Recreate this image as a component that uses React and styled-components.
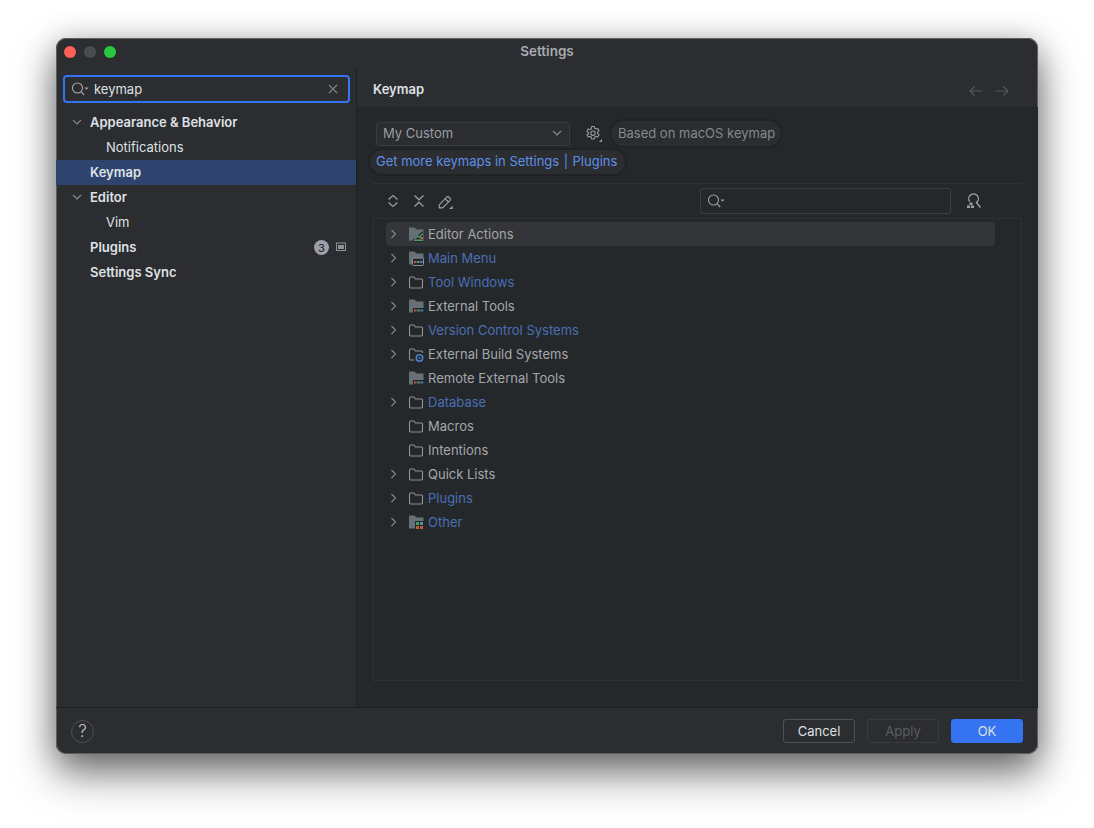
import React from "react";
import styled, { createGlobalStyle } from "styled-components";

const Global = createGlobalStyle`
  html, body { margin: 0; padding: 0; background: #fff; }
  body { font-family: Inter, "Noto Sans", sans-serif; -webkit-font-smoothing: antialiased; }
  #root { width: 1094px; height: 828px; overflow: hidden; }
`;
const Page = styled.div`
  width: 1094px; height: 828px; box-sizing: border-box; padding: 38px 56px 74px;
`;
const Win = styled.div`
  height: 716px; box-sizing: border-box; background: #2b2d30; border-radius: 10px;
  box-shadow: 0 0 0 1px #5d5e60 inset, 0 20px 40px rgba(0,0,0,.5), 0 4px 30px rgba(0,0,0,.25);
  display: flex; flex-direction: column; overflow: hidden; color: #dfe1e5; position: relative;
`;
const TitleBar = styled.div`
  height: 30px; flex: none; display: flex; align-items: center; position: relative; justify-content: center;
  font-size: 13.5px; font-weight: 600; color: #a8abb0; padding-bottom: 4px; box-sizing: border-box;
`;
const Lights = styled.div`
  position: absolute; left: 8px; top: 8px; display: flex; gap: 8px;
`;
const Light = styled.span`
  width: 12px; height: 12px; border-radius: 50%; background: ${p => p.$c};
`;
const Main = styled.div`flex: 1; display: flex; min-height: 0;`;
const Side = styled.div`
  width: 301px; flex: none; box-sizing: border-box; padding-top: 7px; border-right: 1px solid #1e1f22;
`;
const SideSearch = styled.div`
  margin: 0 6px 7px 7px; height: 28px; box-sizing: border-box; border: 2px solid #3574f0; border-radius: 4px;
  display: flex; align-items: center; padding: 0 10px 0 6px; font-size: 13px; color: #dfe1e5;
  & > span { margin-left: 5px; flex: 1; padding-bottom: 1px; }
`;
const SideRow = styled.div`
  height: 25px; display: flex; align-items: center; font-size: 13px; position: relative;
  padding-left: ${p => p.$indent}px; font-weight: ${p => p.$bold ? 600 : 400};
  padding-bottom: 1px; box-sizing: border-box;
  background: ${p => p.$sel ? "#2e436e" : "transparent"};
`;
const SideChev = styled.span`
  position: absolute; left: 15px; top: 6px; width: 12px; height: 12px; display: flex;
`;
const Badge = styled.span`
  position: absolute; left: 258px; top: 5px; width: 15px; height: 15px; border-radius: 50%;
  background: #9da0a8; color: #2b2d30; font-size: 11px; font-weight: 500;
  display: flex; align-items: center; justify-content: center;
`;
const BadgeIcon = styled.span`position: absolute; left: 280px; top: 7px; display: flex;`;
const Right = styled.div`flex: 1; display: flex; flex-direction: column; min-width: 0;`;
const Head = styled.div`
  height: 39px; flex: none; display: flex; align-items: center; justify-content: space-between;
  padding: 3px 28px 0 16px; box-sizing: border-box; font-size: 13px; font-weight: 600;
`;
const Arrows = styled.div`display: flex; gap: 10px; margin-top: 4px;`;
const Body = styled.div`
  flex: 1; background: #25282b; padding: 12px 16px 26px 11px; box-sizing: border-box;
  display: flex; flex-direction: column; min-height: 0;
`;
const KeymapRow = styled.div`
  display: flex; align-items: center; height: 29px; padding-left: 8px; flex: none;
`;
const Combo = styled.div`
  width: 194px; height: 24px; box-sizing: border-box; background: #2b2d30; border: 1px solid #393b40; border-radius: 3px;
  display: flex; align-items: center; justify-content: space-between; padding: 0 6px 1px;
  color: #9a9da3; font-size: 13px;
`;
const GearWrap = styled.span`margin: 0 6px 0 15px; display: flex;`;
const Pill = styled.div`
  height: ${p => p.$h}px; box-sizing: border-box; border: 2px solid #202225; border-radius: 15px; background: #2b2d30;
  display: inline-flex; align-items: center; padding: 0 ${p => p.$pr}px ${p => p.$pb}px ${p => p.$pl}px; font-size: 13px; color: ${p => p.$c};
`;
const LinkRow = styled.div`display: flex; height: 28px; flex: none;`;
const Sep = styled.span`margin: 0 4.5px; color: ${p => p.$c};`;
const Rule = styled.div`height: 1px; margin: 7px 0 0 5px; background: #303236; flex: none;`;
const Tools = styled.div`
  height: 34px; flex: none; display: flex; align-items: center; padding-left: 17px; position: relative;
`;
const ToolIcon = styled.span`display: flex; width: 16px; height: 16px; margin-right: 10px;`;
const TreeSearch = styled.div`
  position: absolute; left: 332px; top: 4px; width: 251px; height: 26px; box-sizing: border-box;
  border: 1px solid #3c3e42; border-radius: 3px; display: flex; align-items: center; padding-left: 6px;
`;
const FindIcon = styled.span`position: absolute; left: 598px; top: 9px; display: flex;`;
const Tree = styled.div`
  flex: 1; margin-left: 5px; border: 1px solid #2f3134; padding: 3px 26px 0 12px; box-sizing: border-box;
`;
const Row = styled.div`
  height: 24px; display: flex; align-items: center; font-size: 13px; border-radius: 4px; padding-bottom: 1px; box-sizing: border-box;
  background: ${p => p.$hi ? "#343538" : "transparent"};
  color: ${p => p.$link ? "#4a6fb5" : "#a4a7ac"};
`;
const Chev = styled.span`width: 14px; margin-right: 8px; height: 12px; display: flex; justify-content: center;`;
const FIcon = styled.span`width: 16px; height: 16px; margin-right: 4px; display: flex;`;
const Foot = styled.div`
  height: 47px; flex: none; border-top: 1px solid #1e1f22; box-sizing: border-box;
  display: flex; align-items: center; padding: 0 15px 0 15px; gap: 12px;
`;
const Help = styled.div`
  width: 23px; height: 23px; box-sizing: border-box; border: 1px solid #4e5055; border-radius: 50%;
  color: #c3c5ca; font-size: 17px; display: flex; align-items: center; justify-content: center; margin-right: auto; font-weight: 300;
`;
const Btn = styled.div`
  width: 72px; height: 24px; box-sizing: border-box; border-radius: 3px; display: flex; align-items: center; justify-content: center;
  font-size: 13px;
  border: 1px solid ${p => p.$kind === "ok" ? "#3574f0" : p.$kind === "off" ? "#393b40" : "#4e5157"};
  background: ${p => p.$kind === "ok" ? "#3574f0" : "transparent"};
  color: ${p => p.$kind === "off" ? "#5a5d63" : "#dfe1e5"};
`;

const Search = ({ c = "#a8abb0" }) => (
  <svg width="18" height="16" viewBox="0 0 18 16" fill="none" stroke={c} strokeWidth="1.1">
    <circle cx="6.500" cy="7" r="5" />
    <path d="M10 10.700 13.200 14" />
    <path d="M13.500 6.500h4l-2 2.200z" fill={c} stroke="none" />
  </svg>
);
const Down = ({ c = "#85888e" }) => (
  <svg width="12" height="12" viewBox="0 0 12 12" fill="none" stroke={c} strokeWidth="1.1"><path d="M2 4 6 8l4-4" /></svg>
);
const RightChev = () => (
  <svg width="12" height="12" viewBox="0 0 12 12" fill="none" stroke="#85888e" strokeWidth="1.1"><path d="M4.500 2 8.500 6l-4 4" /></svg>
);
const Arrow = ({ flip }) => (
  <svg width="16" height="12" viewBox="0 0 16 12" fill="none" stroke="#55585c" strokeWidth="1.1" style={flip ? { transform: "scaleX(-1)" } : undefined}>
    <path d="M14.500 6H2M6.500 1.500 2 6l4.500 4.500" />
  </svg>
);
const Outline = ({ children }) => (
  <svg width="16" height="16" viewBox="0 0 16 16" fill="none">
    <path d="M1.500 4a1 1 0 0 1 1-1h3.200l1.800 2h6a1 1 0 0 1 1 1v7a1 1 0 0 1-1 1h-11a1 1 0 0 1-1-1z" stroke="#8f9196" strokeWidth="1.100" fill="none" />
    {children}
  </svg>
);
const Filled = ({ children }) => (
  <svg width="16" height="16" viewBox="0 0 16 16">
    <path d="M1 1.500h5.500L8.300 3.500H15.500V14.500H1z" fill="#667078" />
    {children}
  </svg>
);
const Dots = () => (
  <g>
    <rect x="5" y="10" width="11" height="6" fill="#25282b" />
    <rect x="6" y="11.500" width="2.600" height="2" fill="#c75450" />
    <rect x="9.300" y="11.500" width="2.600" height="2" fill="#4e9a62" />
    <rect x="12.600" y="11.500" width="2.600" height="2" fill="#4a80c8" />
  </g>
);
const icons = {
  outline: <Outline />,
  editor: (
    <Filled>
      <path d="M5 16V13L15 5V16z" fill="#25282b" />
      <path d="M6.500 13 10 10l1.500 1.500 3-4" stroke="#4e9a62" strokeWidth="1.400" fill="none" />
      <rect x="6" y="13.500" width="9" height="1.500" fill="#4e9a62" />
      <rect x="12.500" y="11" width="2.500" height="2" fill="#c75450" />
    </Filled>
  ),
  menu: (
    <Filled>
      <rect x="4.500" y="8" width="11" height="7.500" rx="1" fill="#25282b" stroke="#8f9196" strokeWidth="1" />
      <rect x="6" y="11" width="2.400" height="2" fill="#c75450" />
      <rect x="9" y="11" width="2.400" height="2" fill="#4e9a62" />
      <rect x="12" y="11" width="2.400" height="2" fill="#4a80c8" />
    </Filled>
  ),
  tools: <Filled><Dots /></Filled>,
  build: (
    <Outline>
      <rect x="6" y="7" width="10" height="9" fill="#25282b" />
      <circle cx="11.500" cy="12" r="3.200" fill="none" stroke="#4a80c8" strokeWidth="1.600" />
      <circle cx="11.500" cy="12" r="0.900" fill="#4a80c8" />
    </Outline>
  ),
  other: (
    <Filled>
      <rect x="7" y="7" width="9" height="9" fill="#25282b" />
      <rect x="8" y="8" width="3" height="3" fill="#4e9a62" />
      <rect x="12" y="8" width="3" height="3" fill="#4a90a8" />
      <rect x="8" y="12" width="3" height="3" fill="#b8662f" />
      <rect x="12" y="12" width="3" height="3" fill="#c75450" />
    </Filled>
  ),
};
const rows = [
  ["Editor Actions", "editor", 1, 0, 1],
  ["Main Menu", "menu", 1, 1],
  ["Tool Windows", "outline", 1, 1],
  ["External Tools", "tools", 1, 0],
  ["Version Control Systems", "outline", 1, 1],
  ["External Build Systems", "build", 1, 0],
  ["Remote External Tools", "tools", 0, 0],
  ["Database", "outline", 1, 1],
  ["Macros", "outline", 0, 0],
  ["Intentions", "outline", 0, 0],
  ["Quick Lists", "outline", 1, 0],
  ["Plugins", "outline", 1, 1],
  ["Other", "other", 1, 1],
];
const gear = "M6.700 1.500h2.600l.4 1.900 1.300.7 1.800-.6 1.300 2.200-1.400 1.300v1.500l1.400 1.300-1.300 2.200-1.800-.6-1.300.7-.4 1.900H6.700l-.4-1.900-1.300-.7-1.800.6-1.300-2.200L3.300 9V7.500L1.900 6.200l1.300-2.200 1.800.6 1.300-.7z";

export default function App() {
  return (
    <Page>
      <Global />
      <Win>
        <TitleBar>
          <Lights>
            <Light $c="#ff5f57" /><Light $c="#4a4b4e" /><Light $c="#28c840" />
          </Lights>
          Settings
        </TitleBar>
        <Main>
          <Side>
            <SideSearch>
              <Search />
              <span>keymap</span>
              <svg width="10" height="10" viewBox="0 0 10 10" stroke="#7e8187" strokeWidth="1.1"><path d="M1 1l8 8M9 1 1 9" /></svg>
            </SideSearch>
            <SideRow $indent={34} $bold><SideChev><Down /></SideChev>Appearance &amp; Behavior</SideRow>
            <SideRow $indent={50}>Notifications</SideRow>
            <SideRow $indent={34} $bold $sel>Keymap</SideRow>
            <SideRow $indent={34} $bold><SideChev><Down /></SideChev>Editor</SideRow>
            <SideRow $indent={50}>Vim</SideRow>
            <SideRow $indent={34} $bold>
              Plugins
              <Badge>3</Badge>
              <BadgeIcon>
                <svg width="10" height="10" viewBox="0 0 10 10" fill="none"><rect x="0.500" y="1" width="9" height="7.500" stroke="#8f9196" /><rect x="2" y="3" width="6" height="4" fill="#8f9196" /></svg>
              </BadgeIcon>
            </SideRow>
            <SideRow $indent={34} $bold>Settings Sync</SideRow>
          </Side>
          <Right>
            <Head>
              Keymap
              <Arrows><Arrow /><Arrow flip /></Arrows>
            </Head>
            <Body>
              <KeymapRow>
                <Combo>My Custom<Down /></Combo>
                <GearWrap>
                  <svg width="18" height="18" viewBox="0 0 18 18" fill="none" stroke="#9a9da3" strokeWidth="1.100">
                    <path d={gear} strokeLinejoin="round" />
                    <circle cx="8" cy="8.200" r="2.200" />
                    <path d="M17 14v3h-3z" fill="#9a9da3" stroke="none" />
                  </svg>
                </GearWrap>
                <Pill $h={29} $pl={7} $pr={6} $pb={1} $c="#85888e">Based on macOS keymap</Pill>
              </KeymapRow>
              <LinkRow>
                <Pill $h={28} $pl={6} $pr={8} $pb={2} $c="#5e8fe8">Get more keymaps in Settings<Sep $c="#5e8fe8">|</Sep>Plugins</Pill>
              </LinkRow>
              <Rule />
              <Tools>
                <ToolIcon>
                  <svg width="16" height="16" viewBox="0 0 16 16" fill="none" stroke="#9a9da3" strokeWidth="1.200"><path d="M3.500 6.500 8 2.500l4.500 4M3.500 9.500 8 13.500l4.500-4" /></svg>
                </ToolIcon>
                <ToolIcon>
                  <svg width="16" height="16" viewBox="0 0 16 16" fill="none" stroke="#9a9da3" strokeWidth="1.200"><path d="M3.500 2.500 8 6.800l4.500-4.300M3.500 13.500 8 9.200l4.500 4.300" /></svg>
                </ToolIcon>
                <ToolIcon>
                  <svg width="18" height="18" viewBox="0 0 18 18" fill="none" stroke="#a4a7ac" strokeWidth="1.300" style={{ marginLeft: 1 }}>
                    <path d="M1.500 12.500 10.500 3a1.700 1.700 0 0 1 2.300 0l1.700 1.700a1.700 1.700 0 0 1 0 2.300L5.500 16h-4zM8.500 5l4 4" strokeLinejoin="round" />
                    <path d="M17.500 13.500v4h-4z" fill="#a4a7ac" stroke="none" />
                  </svg>
                </ToolIcon>
                <TreeSearch><Search c="#9a9da3" /></TreeSearch>
                <FindIcon>
                  <svg width="16" height="16" viewBox="0 0 16 16" fill="none" stroke="#9a9da3" strokeWidth="1.400">
                    <path d="M3.600 8.500A4.800 4.800 0 1 1 10.500 9.600" />
                    <path d="M10 9 14.500 14.500" />
                    <path d="M3.500 9.500h3v2.500h-3zM1 12.500h3v2.500H1zM5 12.500h3v2.500H5z" fill="#9a9da3" stroke="none" />
                  </svg>
                </FindIcon>
              </Tools>
              <Tree>
                {rows.map(([t, ic, ch, link, hi]) => (
                  <Row key={t} $link={link} $hi={hi}>
                    <Chev>{ch ? <RightChev /> : null}</Chev>
                    <FIcon>{icons[ic]}</FIcon>
                    {t}
                  </Row>
                ))}
              </Tree>
            </Body>
          </Right>
        </Main>
        <Foot>
          <Help>?</Help>
          <Btn>Cancel</Btn>
          <Btn $kind="off">Apply</Btn>
          <Btn $kind="ok">OK</Btn>
        </Foot>
      </Win>
    </Page>
  );
}
